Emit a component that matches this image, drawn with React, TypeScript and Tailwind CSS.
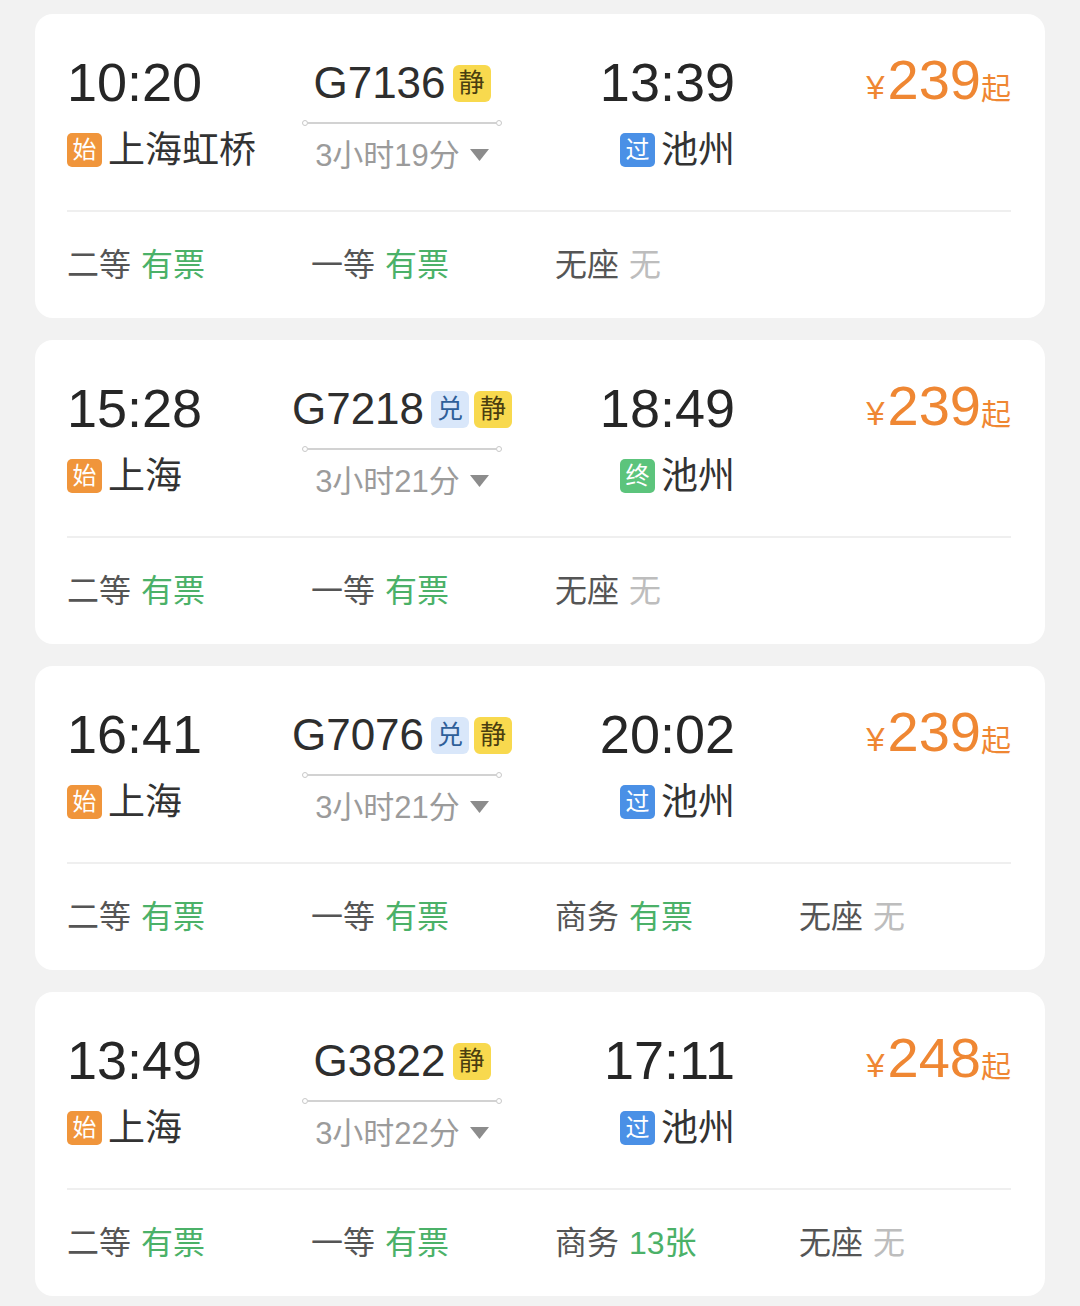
import React from "react";

type Seat = { label: string; value: string; kind: "ok" | "none" };
type Train = {
  dep: string;
  arr: string;
  no: string;
  badges: ("兑" | "静")[];
  dur: string;
  from: string;
  fromTag: string;
  to: string;
  toTag: "过" | "终";
  price: string;
  seats: Seat[];
};

const trains: Train[] = [
  {
    dep: "10:20",
    arr: "13:39",
    no: "G7136",
    badges: ["静"],
    dur: "3小时19分",
    from: "上海虹桥",
    fromTag: "始",
    to: "池州",
    toTag: "过",
    price: "239",
    seats: [
      { label: "二等", value: "有票", kind: "ok" },
      { label: "一等", value: "有票", kind: "ok" },
      { label: "无座", value: "无", kind: "none" },
    ],
  },
  {
    dep: "15:28",
    arr: "18:49",
    no: "G7218",
    badges: ["兑", "静"],
    dur: "3小时21分",
    from: "上海",
    fromTag: "始",
    to: "池州",
    toTag: "终",
    price: "239",
    seats: [
      { label: "二等", value: "有票", kind: "ok" },
      { label: "一等", value: "有票", kind: "ok" },
      { label: "无座", value: "无", kind: "none" },
    ],
  },
  {
    dep: "16:41",
    arr: "20:02",
    no: "G7076",
    badges: ["兑", "静"],
    dur: "3小时21分",
    from: "上海",
    fromTag: "始",
    to: "池州",
    toTag: "过",
    price: "239",
    seats: [
      { label: "二等", value: "有票", kind: "ok" },
      { label: "一等", value: "有票", kind: "ok" },
      { label: "商务", value: "有票", kind: "ok" },
      { label: "无座", value: "无", kind: "none" },
    ],
  },
  {
    dep: "13:49",
    arr: "17:11",
    no: "G3822",
    badges: ["静"],
    dur: "3小时22分",
    from: "上海",
    fromTag: "始",
    to: "池州",
    toTag: "过",
    price: "248",
    seats: [
      { label: "二等", value: "有票", kind: "ok" },
      { label: "一等", value: "有票", kind: "ok" },
      { label: "商务", value: "13张", kind: "ok" },
      { label: "无座", value: "无", kind: "none" },
    ],
  },
];

function TrainBadge({ t }: { t: "兑" | "静" }) {
  if (t === "静") {
    return (
      <span className="flex h-[37px] w-[38px] shrink-0 items-center justify-center rounded-[6px] bg-[#f8d94e] text-[26px] leading-none text-[#4a3e10]">
        静
      </span>
    );
  }
  return (
    <span className="flex h-[37px] w-[38px] shrink-0 items-center justify-center rounded-[6px] bg-[#d9e7fa] text-[26px] leading-none text-[#2f5f99]">
      兑
    </span>
  );
}

function StationTag({ t }: { t: string }) {
  const bg =
    t === "始" ? "bg-[#f0953b]" : t === "终" ? "bg-[#5cc47c]" : "bg-[#4a90e6]";
  return (
    <span
      className={`flex h-[34px] w-[35px] shrink-0 items-center justify-center rounded-[5px] ${bg} text-[24px] leading-none text-white`}
    >
      {t}
    </span>
  );
}

function Card({ d }: { d: Train }) {
  return (
    <div className="flex h-[304px] w-[1010px] flex-col rounded-[18px] bg-white">
      <div className="grid h-[196px] grid-cols-[235px_200px_233px_276px] pl-[32px] pr-[34px] pt-[39px]">
        {/* departure */}
        <div className="flex flex-col">
          <div className="flex h-[60px] items-center">
            <span className="-mt-[3px] text-[54px] leading-none text-[#262626]">
              {d.dep}
            </span>
          </div>
          <div className="mt-[13px] flex h-[48px] items-center gap-[6px]">
            <StationTag t={d.fromTag} />
            <span className="text-[37px] leading-none text-[#333333]">
              {d.from}
            </span>
          </div>
        </div>
        {/* middle */}
        <div className="flex flex-col">
          <div className="flex h-[60px] items-center justify-center gap-[5px] whitespace-nowrap">
            <span className="mr-[2px] shrink-0 text-[44px] leading-none text-[#2e2e2e]">
              {d.no}
            </span>
            {d.badges.map((b) => (
              <TrainBadge key={b} t={b} />
            ))}
          </div>
          <div className="mt-[6px] flex h-[8px] items-center">
            <span className="h-[6px] w-[6px] rounded-full border border-[#c8c8c8]" />
            <span className="h-[1.5px] flex-1 bg-[#d2d2d2]" />
            <span className="h-[6px] w-[6px] rounded-full border border-[#c8c8c8]" />
          </div>
          <div className="mt-[10px] flex h-[36px] items-center justify-center gap-[10px]">
            <span className="text-[31px] leading-none text-[#9b9b9b]">
              {d.dur}
            </span>
            <svg width="19" height="13" viewBox="0 0 19 13">
              <polygon points="0,0 19,0 9.5,12" fill="#8c8c8c" />
            </svg>
          </div>
        </div>
        {/* arrival */}
        <div className="flex flex-col items-end">
          <div className="flex h-[60px] items-center">
            <span className="-mt-[3px] text-[54px] leading-none text-[#262626]">
              {d.arr}
            </span>
          </div>
          <div className="mt-[13px] flex h-[48px] items-center gap-[6px]">
            <StationTag t={d.toTag} />
            <span className="text-[37px] leading-none text-[#333333]">
              {d.to}
            </span>
          </div>
        </div>
        {/* price */}
        <div className="flex h-[60px] items-center justify-end">
          <div className="-mt-[6px] flex items-baseline text-[#ef8733]">
            <span className="mr-[3px] text-[33px] leading-none">¥</span>
            <span className="text-[56px] leading-none">{d.price}</span>
            <span className="text-[30px] leading-none">起</span>
          </div>
        </div>
      </div>
      <div className="ml-[32px] mr-[34px] h-[2px] bg-[#efefef]" />
      <div className="grid flex-1 grid-cols-[244px_244px_244px_212px] items-center pl-[32px] pr-[34px]">
        {d.seats.map((s) => (
          <div key={s.label} className="flex items-center gap-[10px] text-[32px] leading-none">
            <span className="text-[#555555]">{s.label}</span>
            <span
              className={s.kind === "ok" ? "text-[#4bb168]" : "text-[#bdbdbd]"}
            >
              {s.value}
            </span>
          </div>
        ))}
      </div>
    </div>
  );
}

export default function App() {
  return (
    <div className="flex min-h-[1306px] w-[1080px] flex-col gap-[22px] bg-[#f2f2f2] px-[35px] pb-[12px] pt-[14px] [font-family:'Liberation_Sans','Noto_Sans_CJK_SC',sans-serif]">
      {trains.map((t) => (
        <Card key={t.no} d={t} />
      ))}
    </div>
  );
}
